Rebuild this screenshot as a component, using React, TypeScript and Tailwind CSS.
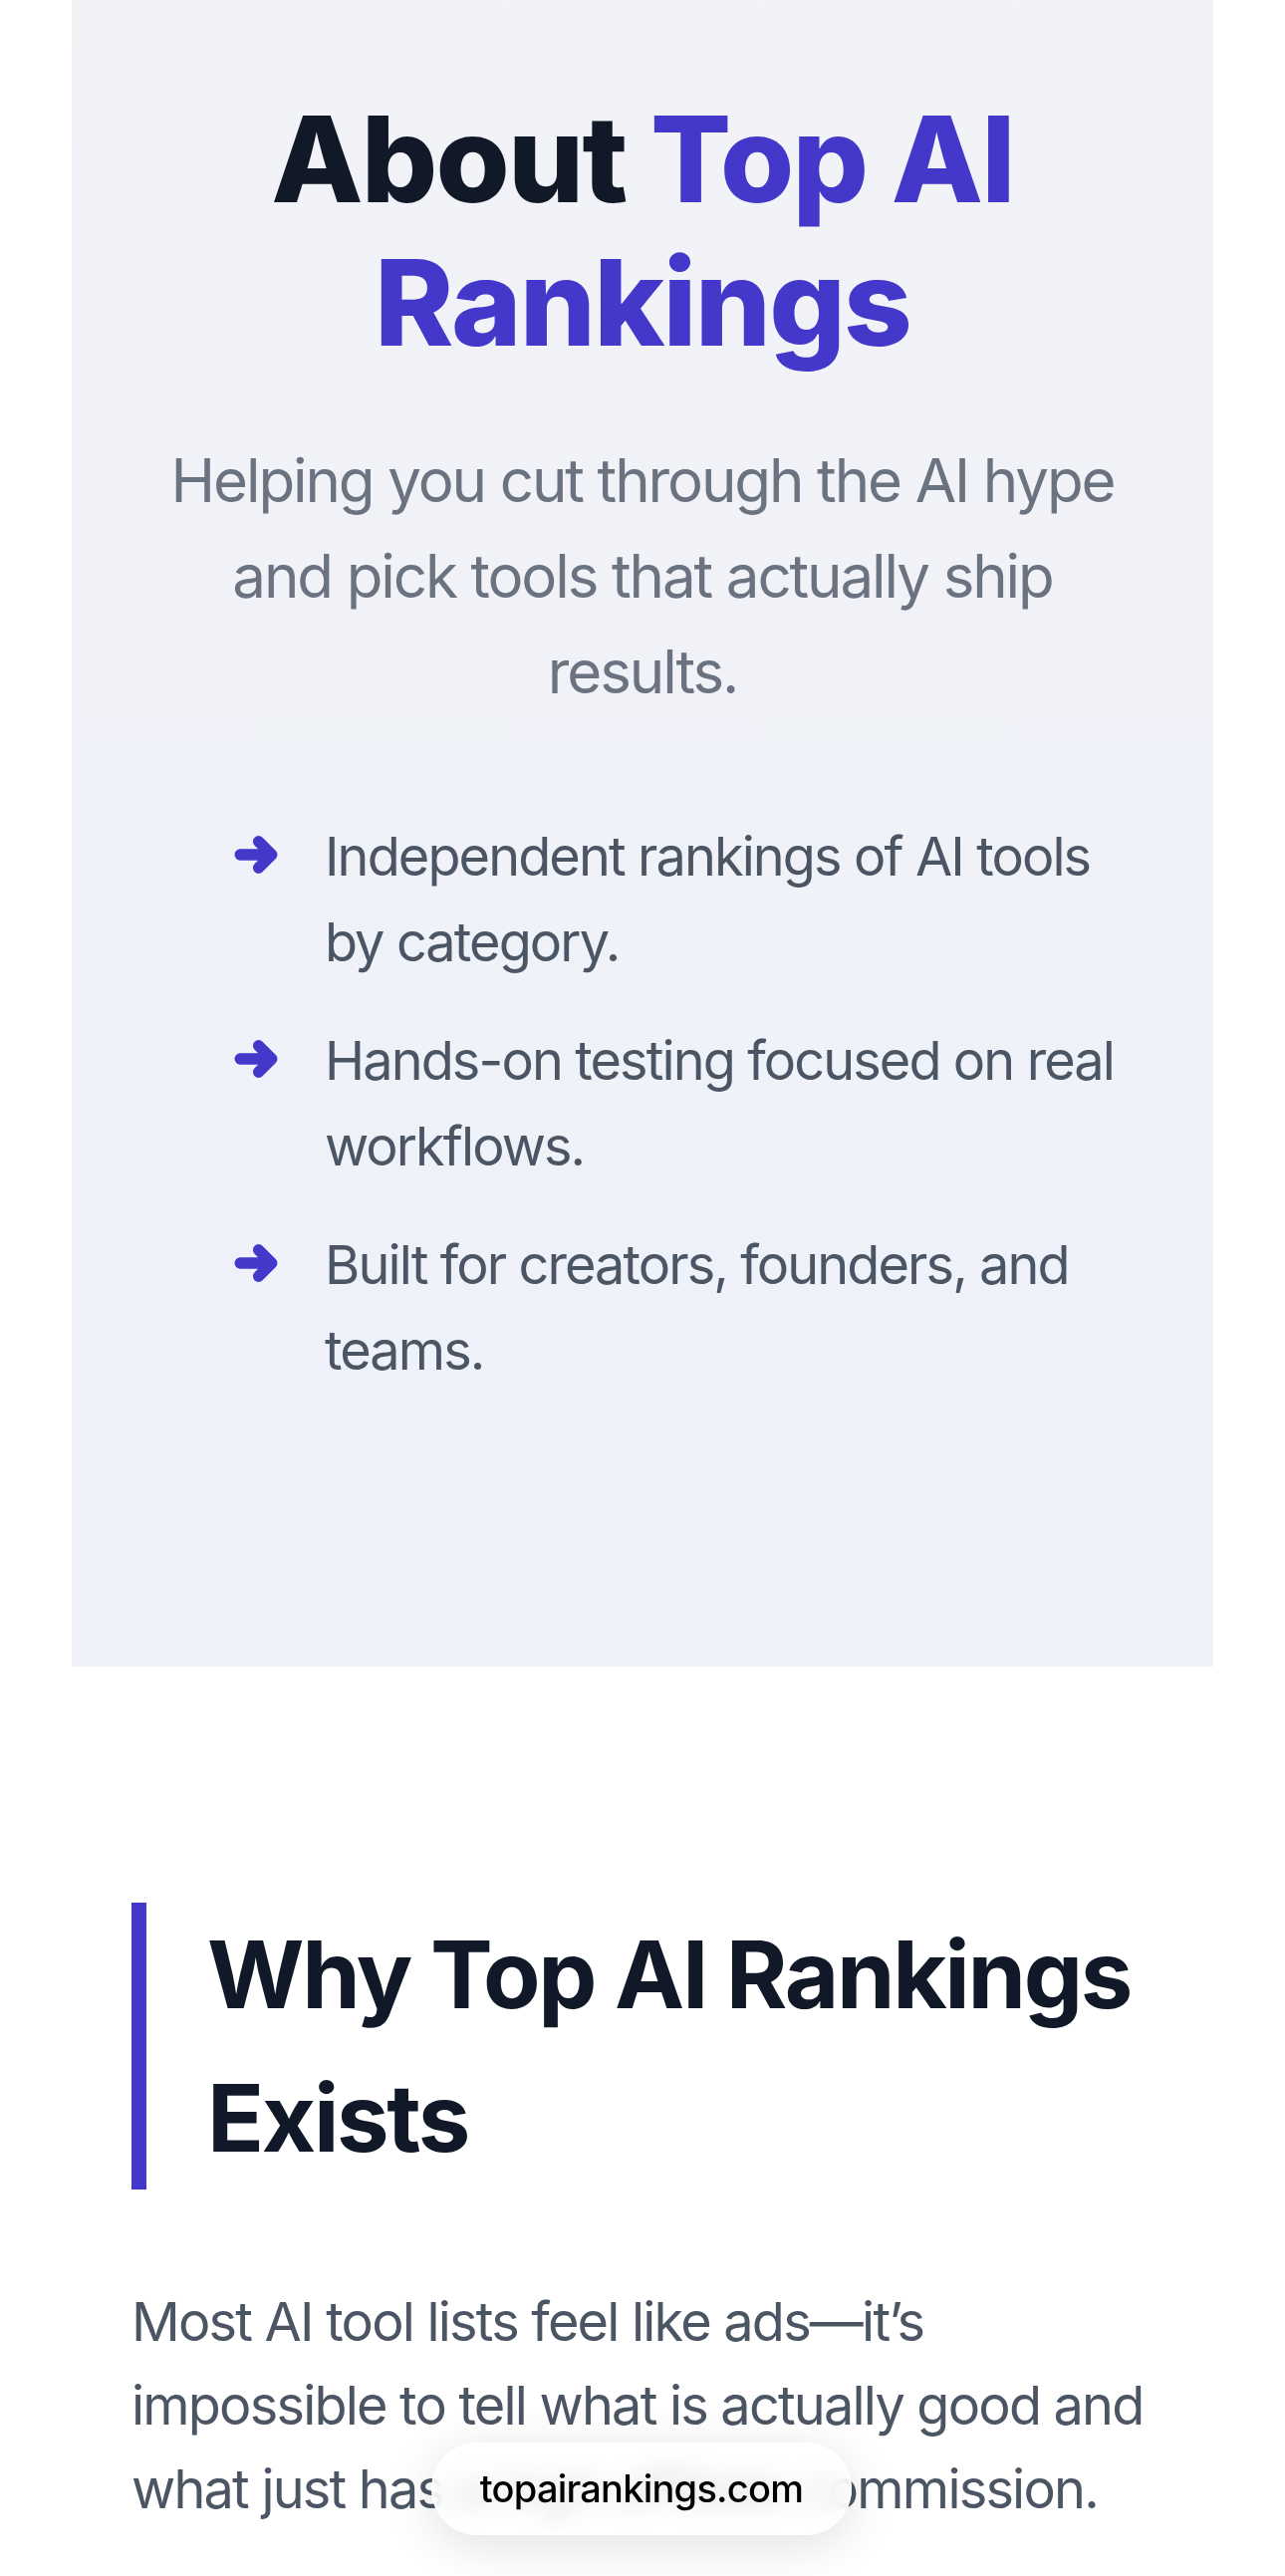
const points = [
  "Independent rankings of AI tools by category.",
  "Hands-on testing focused on real workflows.",
  "Built for creators, founders, and teams.",
];

function ArrowIcon() {
  return (
    <svg viewBox="0.5 2.2 21.5 19.6" className="mt-[20px] h-[42px] w-[44px] shrink-0" fill="none">
      <path
        d="M3.5 12h15M12.5 5.5l6.5 6.5-6.5 6.5"
        stroke="#4338ca"
        strokeWidth="5.5"
        strokeLinecap="round"
        strokeLinejoin="round"
      />
    </svg>
  );
}

export default function App() {
  return (
    <div className="relative min-h-[2586px] overflow-hidden bg-white font-['Inter',sans-serif]">
      {/* hero card */}
      <section className="mx-[72px] bg-gradient-to-b from-[#f2f3f7] to-[#eef1fa] px-[72px] pt-[88px] pb-[274px]">
        <h1 className="text-center text-[120px] font-extrabold leading-[144px] tracking-[-0.015em] text-[#111827]">
          About <span className="text-[#4338ca]">Top AI Rankings</span>
        </h1>
        <p className="mx-auto mt-[58px] max-w-[990px] text-center text-[60px] leading-[96px] tracking-[-0.035em] text-[#6b7280]">
          Helping you cut through the AI hype and pick tools that actually ship results.
        </p>
        <ul className="mt-[95px] flex flex-col gap-[33px] pl-[91px]">
          {points.map((p) => (
            <li key={p} className="flex items-start gap-[47px]">
              <ArrowIcon />
              <span className="text-[54px] leading-[86px] tracking-[-0.035em] text-[#4b5563]">{p}</span>
            </li>
          ))}
        </ul>
      </section>

      {/* why section */}
      <section className="pl-[132px] pr-[100px] pt-[237px]">
        <h2 className="border-l-[15px] border-[#4338ca] pl-[61px] text-[94px] font-bold leading-[144px] tracking-[-0.025em] text-[#111827]">
          Why Top AI Rankings Exists
        </h2>
        <p className="mt-[91px] text-[54px] leading-[84px] tracking-[-0.033em] text-[#4b5563]">
          Most AI tool lists feel like ads—it’s impossible to tell what is actually good and what just has a high affiliate commission.
        </p>
      </section>

      {/* browser url pill */}
      <div className="absolute left-[433px] top-[2452px] flex h-[93px] w-[422px] items-center justify-center rounded-full border-2 border-white/80 bg-white/80 shadow-[0_10px_50px_rgba(0,0,0,0.12)] backdrop-blur-md">
        <span className="text-[38px] font-medium tracking-[-0.02em] text-black">topairankings.com</span>
      </div>
    </div>
  );
}
